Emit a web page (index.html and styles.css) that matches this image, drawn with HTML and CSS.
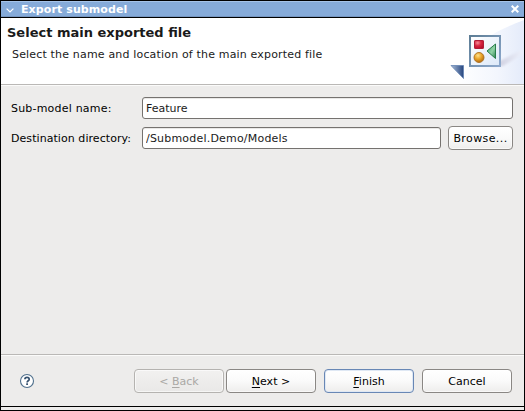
FILE: index.html
```html
<!DOCTYPE html>
<html lang="en">
<head>
<meta charset="utf-8">
<title>Export submodel</title>
<link rel="stylesheet" href="styles.css">
</head>
<body>
<div class="window">
  <div class="titlebar">
    <svg class="menu-icon" width="8" height="5" viewBox="0 0 8 5"><path d="M.6.6 4 4 7.400.6" fill="none" stroke="#fff" stroke-width="1.2"/></svg>
    <span class="title">Export submodel</span>
    <svg class="close-icon" width="8" height="8" viewBox="0 0 8 8"><path d="M.7.7l6.600 6.600M7.300.7.7 7.300" stroke="#fff" stroke-width="2"/></svg>
  </div>
  <div class="header">
    <div class="heading">
      <h1>Select main exported file</h1>
      <p>Select the name and location of the main exported file</p>
    </div>
    <svg class="banner" width="75" height="66" viewBox="0 0 75 66">
      <defs>
        <linearGradient id="sky" x1="0" y1="0" x2="1" y2="0"><stop offset="0" stop-color="#fff"/><stop offset=".6" stop-color="#f3f6fd"/><stop offset="1" stop-color="#e4ebfa"/></linearGradient>
        <linearGradient id="ray" x1="0" y1="0" x2="1" y2="0"><stop offset=".2" stop-color="#cfcfdf"/><stop offset="1" stop-color="#ecf0fb"/></linearGradient>
        <filter id="soft"><feGaussianBlur stdDeviation="1.2"/></filter>
        <linearGradient id="corner" x1="0" y1="0" x2="1" y2="0"><stop offset="0" stop-color="#a9bdd8"/><stop offset="1" stop-color="#26457f"/></linearGradient>
        <linearGradient id="frame" x1="0" y1="0" x2="1" y2="1"><stop offset="0" stop-color="#5d7d95"/><stop offset="1" stop-color="#8ea9cd"/></linearGradient>
        <linearGradient id="pane" x1="0" y1="0" x2="1" y2="1"><stop offset="0" stop-color="#fff"/><stop offset="1" stop-color="#dce8f8"/></linearGradient>
        <radialGradient id="red" cx=".35" cy=".3" r=".75"><stop offset="0" stop-color="#f58c98"/><stop offset=".5" stop-color="#d82642"/><stop offset="1" stop-color="#b70d2c"/></radialGradient>
        <radialGradient id="gold" cx=".4" cy=".3" r=".7"><stop offset="0" stop-color="#ffe08a"/><stop offset=".5" stop-color="#eaa62c"/><stop offset="1" stop-color="#b66c0c"/></radialGradient>
        <linearGradient id="green" x1="0" y1="0" x2="1" y2="1"><stop offset="0" stop-color="#3b9b62"/><stop offset=".55" stop-color="#91d3a6"/><stop offset="1" stop-color="#277f4a"/></linearGradient>
      </defs>
      <path d="M75 2C60 8 49 12 38 20L8 66H75Z" fill="url(#sky)"/>
      <path d="M41 48 74 31V36L54 48Z" fill="url(#ray)" filter="url(#soft)"/>
      <path d="M2 47.500H14.500V60.500Z" fill="url(#corner)" stroke="#6484b3" stroke-width=".8"/>
      <rect x="21" y="18" width="30" height="30" fill="url(#pane)" stroke="url(#frame)" stroke-width="2"/>
      <rect x="25.500" y="22.500" width="9" height="8" rx=".6" fill="url(#red)" stroke="#b01b37"/>
      <circle cx="30" cy="39.500" r="5" fill="url(#gold)" stroke="#a96d1f" stroke-width=".9"/>
      <path d="M38 33 46.500 26V40.500Z" fill="url(#green)" stroke="#287c4a"/>
    </svg>
  </div>
  <div class="content">
    <label class="short" for="name">Sub-model name:</label>
    <input id="name" class="wide" type="text" value="Feature">
    <label for="dir">Destination directory:</label>
    <input id="dir" class="path" type="text" value="/Submodel.Demo/Models">
    <button class="browse" type="button">Browse...</button>
  </div>
  <div class="footer">
    <svg class="help" width="16" height="16" viewBox="0 0 16 16"><circle cx="8" cy="8" r="6.500" fill="#fff" stroke="#50708d" stroke-width="1.100"/><path d="M5.900 6.300C5.900 3.600 10.200 3.700 10.200 6.200 10.200 7.800 8.100 7.700 8.100 9.500" fill="none" stroke="#36516f" stroke-width="1.700"/><rect x="7.200" y="10.300" width="1.800" height="1.700" fill="#36516f"/></svg>
    <div class="nav">
      <button type="button" disabled>&lt; <u>B</u>ack</button>
      <button type="button"><u>N</u>ext &gt;</button>
    </div>
    <button class="default" type="button"><u>F</u>inish</button>
    <button type="button">Cancel</button>
  </div>
  <div class="grip"></div>
</div>
</body>
</html>
```
FILE: styles.css
```css
* { box-sizing: border-box; }

body {
  margin: 0;
  font: 11px/14px "DejaVu Sans", sans-serif;
  color: #1a1a1a;
}

.window {
  display: flex;
  flex-direction: column;
  width: 525px;
  height: 411px;
  border: 1px solid #000;
  background: #edeceb;
}

.titlebar {
  display: flex;
  align-items: center;
  flex: none;
  height: 17px;
  padding: 0 5px;
  border-bottom: 1px solid #000;
  background: #86abd9;
  box-shadow: inset 0 1px #a5c3e8, inset 0 -1px #7595bf;
  color: #fff;
}

.menu-icon { margin-top: 2px; }

.title {
  flex: 1;
  margin-left: 7px;
  padding-top: 1px;
  font-weight: bold;
  letter-spacing: 0.1px;
}

.header {
  display: flex;
  justify-content: space-between;
  flex: none;
  height: 67px;
  border-bottom: 1px solid #bab8b6;
  background: #fff;
}

.heading { padding: 6px 0 0 6px; white-space: nowrap; }

h1 { margin: 0; font-size: 13px; line-height: 17px; }

p { margin: 7px 0 0 5px; letter-spacing: 0.17px; }

.content {
  display: grid;
  grid-template-columns: 124px 299px 65px;
  grid-template-rows: 24px 24px;
  column-gap: 7px;
  row-gap: 6px;
  align-items: center;
  flex: 1;
  align-content: start;
  padding: 10px 11px 0 10px;
  border-top: 1px solid #fbfbfa;
}

label { padding-top: 1px; color: #000; white-space: nowrap; letter-spacing: 0.06px; }

.short { letter-spacing: 0.2px; }

input {
  width: 100%;
  min-width: 0;
  height: 22px;
  padding: 0 3px;
  border: 1px solid #75726f;
  border-radius: 3px;
  background: #fff;
  box-shadow: inset 0 1px #e9e8e7;
  color: #1a1a1a;
  font: inherit;
  outline: 0;
}

.wide { grid-column: 2 / 4; }

.path { letter-spacing: 0.2px; }

button {
  width: 90px;
  height: 24px;
  padding: 2px 0 0;
  border: 1px solid #8a8784;
  border-radius: 4px;
  background: linear-gradient(#fff, #fafafa 50%, #eeedec);
  box-shadow: inset 0 0 0 1px rgba(255, 255, 255, 0.6);
  color: #000;
  font: inherit;
}

u { text-underline-offset: 2px; text-decoration-thickness: 1px; text-decoration-skip-ink: none; }

.browse { width: 65px; padding-top: 1px; letter-spacing: 0.4px; }

.default { border-color: #6887b5; box-shadow: inset 0 0 0 1px #dfe8f4; }

button:disabled {
  border-color: #b5b3b0;
  background: linear-gradient(#f2f1f0, #e9e8e7);
  color: #aaa8a5;
}

.footer {
  display: flex;
  align-items: center;
  gap: 8px;
  flex: none;
  height: 52px;
  padding: 0 12px 0 18px;
  border-top: 1px solid #bab8b6;
  box-shadow: inset 0 1px #fbfbfa;
}

.nav { display: flex; gap: 2px; margin-left: auto; }

.grip { flex: none; height: 4px; border-top: 1px solid #000; }
```
